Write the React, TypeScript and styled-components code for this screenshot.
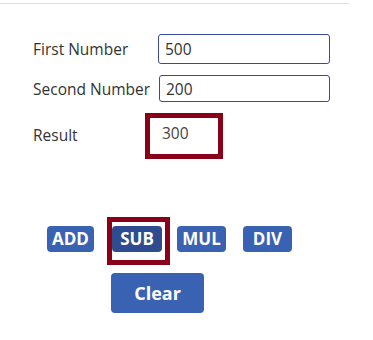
import React from 'react'
import styled, { createGlobalStyle } from 'styled-components'

const GlobalStyle = createGlobalStyle`
  html, body {
    margin: 0;
    padding: 0;
    background: #ffffff;
  }
  body {
    font-family: "Open Sans", "Noto Sans", sans-serif;
    color: #333333;
  }
`

const Screen = styled.div`
  width: 373px;
  height: 340px;
  background: #ffffff;
  overflow: hidden;
`

const TopRule = styled.div`
  margin-top: 3px;
  width: 349px;
  height: 1px;
  background: #dedede;
`

const Form = styled.div`
  display: grid;
  grid-template-columns: 125px 172px;
  grid-template-rows: 30px 27px 46px;
  row-gap: 11px;
  align-items: center;
  padding: 30px 0 0 33px;
`

const Label = styled.div<{ $down?: number }>`
  font-size: 15.5px;
  color: #333333;
  margin-top: ${p => p.$down || 0}px;
`

const Input = styled.input<{ $shift?: number }>`
  box-sizing: border-box;
  width: ${p => 172 - (p.$shift || 0)}px;
  margin-left: ${p => p.$shift || 0}px;
  height: 100%;
  border: 1.5px solid #3b4a98;
  border-radius: 3px;
  padding: 0 6px;
  font-family: "Open Sans", "Noto Sans", sans-serif;
  font-size: 15.5px;
  color: #333333;
  background: #ffffff;
  outline: none;
`

const ResultBox = styled.div`
  box-sizing: border-box;
  width: 78px;
  height: 46px;
  margin-left: -13px;
  border: 5px solid #8a0018;
  padding: 4px 0 0 12px;
  font-size: 15.5px;
  color: #444444;
  display: flex;
  align-items: flex-start;
`

const ButtonRow = styled.div`
  display: grid;
  grid-template-columns: 65px 65px 66px 65px;
  padding: 67px 0 0 47px;
  height: 26px;
`

const Cell = styled.div`
  position: relative;
  height: 26px;
`

const OpButton = styled.button<{ $w: number; $dark?: boolean }>`
  width: ${p => p.$w}px;
  height: 26px;
  border: none;
  border-radius: 4px;
  padding: 0;
  background: ${p => (p.$dark ? '#2e4c8f' : '#3a62b3')};
  color: #ffffff;
  font-family: "Open Sans", "Noto Sans", sans-serif;
  font-weight: 700;
  font-size: 17px;
  line-height: 26px;
  cursor: pointer;
`

const Highlight = styled.div`
  position: absolute;
  top: -9px;
  left: -5px;
  width: 63px;
  height: 48px;
  box-sizing: border-box;
  border: 5px solid #8a0018;
  pointer-events: none;
`

const ClearRow = styled.div`
  padding: 21px 0 0 111px;
`

const ClearButton = styled.button`
  width: 93px;
  height: 40px;
  border: none;
  border-radius: 4px;
  background: #3a62b3;
  color: #ffffff;
  font-family: "Open Sans", "Noto Sans", sans-serif;
  font-weight: 700;
  font-size: 18px;
  cursor: pointer;
`

export default function App() {
  return (
    <Screen>
      <GlobalStyle />
      <TopRule />
      <Form>
        <Label>First Number</Label>
        <Input defaultValue="500" />
        <Label>Second Number</Label>
        <Input defaultValue="200" $shift={1} />
        <Label $down={-2}>Result</Label>
        <ResultBox>300</ResultBox>
      </Form>
      <ButtonRow>
        <Cell>
          <OpButton $w={47}>ADD</OpButton>
        </Cell>
        <Cell>
          <OpButton $w={50} $dark>SUB</OpButton>
          <Highlight />
        </Cell>
        <Cell>
          <OpButton $w={49}>MUL</OpButton>
        </Cell>
        <Cell>
          <OpButton $w={49}>DIV</OpButton>
        </Cell>
      </ButtonRow>
      <ClearRow>
        <ClearButton>Clear</ClearButton>
      </ClearRow>
    </Screen>
  )
}
